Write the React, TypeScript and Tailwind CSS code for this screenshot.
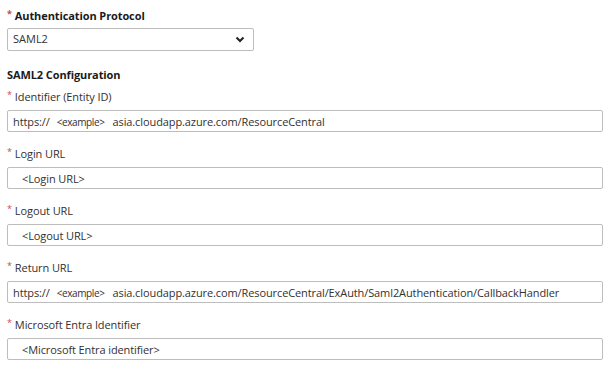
import React from "react";

const Star = () => <span className="text-[#d0474c] mr-[3px] text-[9px] relative top-[-2px]">*</span>;

function Label({ children }: { children: React.ReactNode }) {
  return (
    <div className="h-[20px] flex items-center text-[11px] tracking-[-0.1px] text-[#323130] leading-none">
      <Star />
      {children}
    </div>
  );
}

function Box({ children, indent }: { children: React.ReactNode; indent?: boolean }) {
  return (
    <div
      className={`h-[22px] w-[596px] border border-[#bdbdbd] rounded-[2px] flex items-center pt-[1px] text-[11px] tracking-[-0.1px] text-[#323130] leading-none ${
        indent ? "pl-[14px]" : "pl-[5px]"
      }`}
    >
      {children}
    </div>
  );
}

const Ex = () => <span className="text-[10px] tracking-[-0.4px] ml-[7px] mr-[8px]">&lt;example&gt;</span>;

export default function App() {
  return (
    <div
      className="w-[615px] h-[368px] bg-white pl-[7px] pt-[5px]"
      style={{ fontFamily: '"Open Sans", "Noto Sans", sans-serif' }}
    >
      <div className="h-[20px] flex items-center text-[11px] tracking-[-0.1px] font-bold text-[#1b1a19] leading-none">
        <Star />
        Authentication Protocol
      </div>
      <div className="mt-[3px] h-[23px] w-[247px] border border-[#bdbdbd] rounded-[2px] flex items-center justify-between pl-[5px] pr-[8px] text-[11px] text-[#323130]">
        <span>SAML2</span>
        <svg width="10" height="7" viewBox="0 0 10 7">
          <path d="M1.5 1.5 L5 5 L8.5 1.5" stroke="#222" strokeWidth="2" fill="none" />
        </svg>
      </div>
      <div className="mt-[14px] h-[18px] flex items-center text-[11px] tracking-[-0.1px] font-bold text-[#1b1a19] leading-none">
        SAML2 Configuration
      </div>
      <div className="mt-[3px]">
        <Label>Identifier (Entity ID)</Label>
      </div>
      <div className="mt-[4px]">
        <Box>
          https://
          <Ex />
          asia.cloudapp.azure.com/ResourceCentral
        </Box>
      </div>
      <div className="mt-[11px]">
        <Label>Login URL</Label>
      </div>
      <div className="mt-[4px]">
        <Box indent>&lt;Login URL&gt;</Box>
      </div>
      <div className="mt-[11px]">
        <Label>Logout URL</Label>
      </div>
      <div className="mt-[4px]">
        <Box indent>&lt;Logout URL&gt;</Box>
      </div>
      <div className="mt-[11px]">
        <Label>Return URL</Label>
      </div>
      <div className="mt-[4px]">
        <Box>
          https://
          <Ex />
          asia.cloudapp.azure.com/ResourceCentral/ExAuth/Saml2Authentication/CallbackHandler
        </Box>
      </div>
      <div className="mt-[11px]">
        <Label>Microsoft Entra Identifier</Label>
      </div>
      <div className="mt-[4px]">
        <Box indent>&lt;Microsoft Entra identifier&gt;</Box>
      </div>
    </div>
  );
}
